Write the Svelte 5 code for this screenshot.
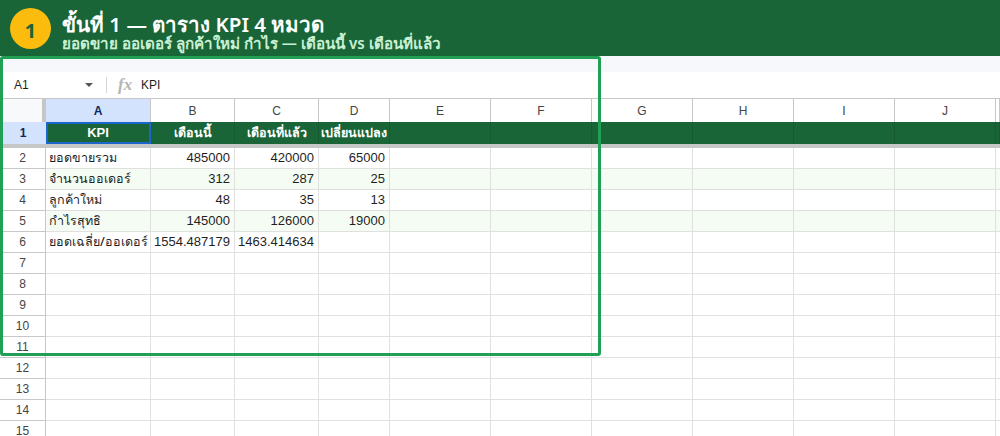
<script>
	const columns = [
		{ name: 'A', width: 105 },
		{ name: 'B', width: 84 },
		{ name: 'C', width: 84 },
		{ name: 'D', width: 71 },
		{ name: 'E', width: 101 },
		{ name: 'F', width: 101 },
		{ name: 'G', width: 101 },
		{ name: 'H', width: 101 },
		{ name: 'I', width: 101 },
		{ name: 'J', width: 101 },
		{ name: '', width: 4 }
	];
	const gridTemplate = '46px ' + columns.map((c) => c.width + 'px').join(' ');

	const headings = ['KPI', 'เดือนนี้', 'เดือนที่แล้ว', 'เปลี่ยนแปลง'];
	const data = [
		['ยอดขายรวม', '485000', '420000', '65000'],
		['จำนวนออเดอร์', '312', '287', '25'],
		['ลูกค้าใหม่', '48', '35', '13'],
		['กำไรสุทธิ', '145000', '126000', '19000'],
		['ยอดเฉลี่ย/ออเดอร์', '1554.487179', '1463.414634', '']
	];
	const rows = Array.from({ length: 14 }, (_, i) => data[i] ?? []);
</script>

<div class="page">
	<header class="banner">
		<div class="badge">1</div>
		<div class="titles">
			<h1>ขั้นที่ 1 — ตาราง KPI 4 หมวด</h1>
			<p>ยอดขาย ออเดอร์ ลูกค้าใหม่ กำไร — เดือนนี้ vs เดือนที่แล้ว</p>
		</div>
	</header>

	<div class="toolbar"></div>

	<div class="formula">
		<span class="ref">A1</span>
		<span class="caret"></span>
		<span class="divider"></span>
		<span class="fx">fx</span>
		<span class="value">KPI</span>
	</div>

	<div class="sheet" style="grid-template-columns: {gridTemplate}">
		<div class="col corner"></div>
		{#each columns as col, c}
			<div class="col" class:picked={c === 0}>{col.name}</div>
		{/each}

		<div class="rownum picked first">1</div>
		{#each columns as col, c}
			<div class="head" class:active={c === 0}>{headings[c] ?? ''}</div>
		{/each}

		<div class="freeze"></div>

		{#each rows as row, r}
			<div class="rownum">{r + 2}</div>
			{#each columns as col, c}
				<div class="cell" class:num={c > 0} class:tint={r === 1 || r === 3}>{row[c] ?? ''}</div>
			{/each}
		{/each}
	</div>

	<div class="callout"></div>
</div>

<style>
	:global(body) {
		margin: 0;
		background: #fff;
	}

	.page {
		position: relative;
		width: 1000px;
		height: 436px;
		overflow: hidden;
		font-family: 'Liberation Sans', 'Noto Sans', sans-serif;
		color: #1f1f1f;
	}

	.banner {
		height: 56px;
		background: #196537;
		display: flex;
		align-items: flex-start;
		gap: 11px;
		padding: 8px 0 0 10px;
		box-sizing: border-box;
	}

	.badge {
		width: 41px;
		height: 41px;
		border-radius: 50%;
		background: #fbbc0d;
		color: #196537;
		font: 700 20px/45px 'Open Sans', sans-serif;
		text-align: center;
		flex: none;
	}

	.titles {
		margin-top: 3px;
	}

	h1 {
		margin: 0;
		font: 600 20.5px/27px 'Noto Sans', sans-serif;
		color: #fff;
	}

	p {
		margin: -5px 0 0;
		font: 600 15.2px/20px 'Noto Sans', sans-serif;
		color: #c9f0d3;
	}

	.toolbar {
		height: 16px;
		background: #f6f8fb;
	}

	.formula {
		height: 26px;
		display: flex;
		align-items: center;
		font-size: 12px;
		background: #fff;
	}

	.ref {
		margin-left: 14px;
		width: 71px;
	}

	.caret {
		width: 0;
		height: 0;
		border-left: 4px solid transparent;
		border-right: 4px solid transparent;
		border-top: 4px solid #555;
	}

	.divider {
		width: 1px;
		height: 16px;
		background: #d5d5d5;
		margin: 0 11px 0 13px;
	}

	.fx {
		font: italic 700 17px 'Liberation Serif', serif;
		color: #b5b5b5;
		width: 23px;
	}

	.sheet {
		display: grid;
		grid-auto-rows: 21px;
		grid-template-rows: 24px 22px 4px;
	}

	.col {
		display: flex;
		align-items: center;
		justify-content: center;
		font-size: 12px;
		color: #444;
		box-sizing: border-box;
		border-top: 1px solid #c7c7c7;
		border-right: 1px solid #c7c7c7;
		background: #fff;
	}

	.col.corner {
		background: #f8f9fa;
		border-right: 4px solid #c4c7c5;
	}

	.col.picked {
		background: #d3e3fd;
		color: #0b2a5c;
		font-weight: 700;
	}

	.head {
		background: #196537;
		color: #fff;
		font: 700 12.5px/22px 'Noto Sans', sans-serif;
		text-align: center;
		white-space: nowrap;
		box-sizing: border-box;
		border-right: 1px solid #175a32;
	}

	.head.active {
		outline: 2px solid #1a66c9;
		outline-offset: -2px;
		font: 700 13px/22px 'Liberation Sans', sans-serif;
	}

	.freeze {
		grid-column: 1 / -1;
		background: #c4c7c5;
	}

	.rownum {
		display: flex;
		align-items: center;
		justify-content: center;
		font-size: 12px;
		color: #444;
		box-sizing: border-box;
		border-right: 1px solid #c7c7c7;
		border-bottom: 1px solid #c7c7c7;
	}

	.rownum.picked {
		background: #d3e3fd;
		color: #0b2a5c;
		font-weight: 700;
		border: 0;
	}

	.cell {
		font: 500 12.5px/20px 'Noto Sans', sans-serif;
		padding: 0 3px;
		box-sizing: border-box;
		border-right: 1px solid #e0e0e0;
		border-bottom: 1px solid #e0e0e0;
		white-space: nowrap;
	}

	.cell.num {
		font: 13px/20px 'Liberation Sans', sans-serif;
		text-align: right;
		padding-right: 4px;
	}

	.cell.tint {
		background: #f5fcf4;
	}

	.callout {
		position: absolute;
		left: 0;
		top: 56px;
		width: 601px;
		height: 300px;
		box-sizing: border-box;
		border: 3px solid #1fa055;
		border-radius: 3px;
		pointer-events: none;
	}
</style>
